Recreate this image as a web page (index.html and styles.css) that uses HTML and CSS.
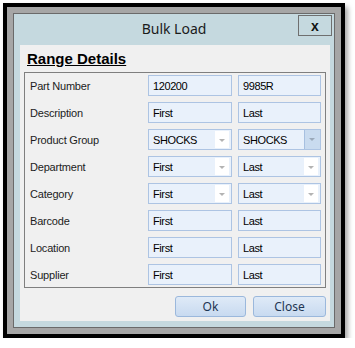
FILE: index.html
```html
<!DOCTYPE html>
<html lang="en">
<head>
    <meta charset="UTF-8">
    <title>Bulk Load</title>
    <link rel="stylesheet" href="styles.css">
</head>
<body>
    <div class="frame">
        <div class="window">
            <!-- Title bar -->
            <div class="titlebar">
                <span class="title">Bulk Load</span>
                <button class="close-x">x</button>
            </div>
            <!-- Panel -->
            <div class="panel">
                <h2 class="heading">Range Details</h2>
                <div class="group">
                    <div class="row">
                        <label>Part Number</label>
                        <div class="box">120200</div>
                        <div class="box">9985R</div>
                    </div>
                    <div class="row">
                        <label>Description</label>
                        <div class="box">First</div>
                        <div class="box">Last</div>
                    </div>
                    <div class="row">
                        <label>Product Group</label>
                        <div class="box combo">SHOCKS<span class="drop"></span></div>
                        <div class="box combo">SHOCKS<span class="drop active"></span></div>
                    </div>
                    <div class="row">
                        <label>Department</label>
                        <div class="box combo">First<span class="drop"></span></div>
                        <div class="box combo">Last<span class="drop"></span></div>
                    </div>
                    <div class="row">
                        <label>Category</label>
                        <div class="box combo">First<span class="drop"></span></div>
                        <div class="box combo">Last<span class="drop"></span></div>
                    </div>
                    <div class="row">
                        <label>Barcode</label>
                        <div class="box">First</div>
                        <div class="box">Last</div>
                    </div>
                    <div class="row">
                        <label>Location</label>
                        <div class="box">First</div>
                        <div class="box">Last</div>
                    </div>
                    <div class="row">
                        <label>Supplier</label>
                        <div class="box">First</div>
                        <div class="box">Last</div>
                    </div>
                </div>
                <div class="actions">
                    <button class="btn ok">Ok</button>
                    <button class="btn close">Close</button>
                </div>
            </div>
        </div>
    </div>
</body>
</html>
```

FILE: styles.css
```css
* {
    margin: 0;
    padding: 0;
    box-sizing: border-box;
}
body {
    font-family: 'Liberation Sans', sans-serif;
    background-color: #ffffff;
    color: #1a1a1a;
    padding: 3px 0 0 3px;
}
/* Outer frame */
.frame {
    width: 342px;
    height: 335px;
    border: 4px solid #000000;
    background-color: #a6a6a6;
    padding: 6px;
    box-shadow: 3px 4px 5px rgba(0, 0, 0, 0.35);
}
.window {
    height: 100%;
    border: 1px solid #6a6a6a;
    background-color: #c5d9df;
    display: flex;
    flex-direction: column;
}
/* Title bar */
.titlebar {
    height: 31px;
    display: flex;
    justify-content: center;
    align-items: center;
    position: relative;
}
.title {
    font-family: 'Noto Sans', sans-serif;
    font-size: 14px;
    color: #1b1b1b;
    margin-top: -2px;
}
.close-x {
    position: absolute;
    top: 1px;
    right: 2px;
    width: 34px;
    height: 21px;
    border: 1px solid #6f6f6f;
    background-color: #c5d9df;
    font-family: 'Liberation Sans', sans-serif;
    font-weight: bold;
    font-size: 14px;
    line-height: 16px;
    color: #111111;
}
/* Panel */
.panel {
    flex: 1;
    background-color: #f0f0f0;
    margin: 0 4px 6px 6px;
    padding: 5px 4px 0 4px;
}
.heading {
    font-size: 15px;
    font-weight: bold;
    text-decoration: underline;
    color: #000000;
    margin-left: 3px;
    height: 22px;
    line-height: 17px;
}
.group {
    border: 1px solid #7f7f7f;
    padding: 2px 3px 2px 5px;
    display: flex;
    flex-direction: column;
    gap: 6px;
}
.row {
    display: grid;
    grid-template-columns: 112px 84px 83px;
    column-gap: 6px;
    align-items: center;
}
.row label {
    font-size: 11px;
    letter-spacing: -0.2px;
    color: #1c1c1c;
    padding-top: 1px;
}
.box {
    height: 21px;
    background-color: #e9f1fb;
    border: 1px solid #adc4e3;
    font-size: 11px;
    letter-spacing: -0.4px;
    line-height: 20px;
    padding-left: 4px;
    color: #000000;
    position: relative;
}
.drop {
    position: absolute;
    top: 1px;
    right: 2px;
    width: 14px;
    height: 17px;
    background-color: #ffffff;
}
.drop::after {
    content: '';
    position: absolute;
    left: 4px;
    top: 8px;
    border-left: 3px solid transparent;
    border-right: 3px solid transparent;
    border-top: 3px solid #b3b3b3;
}
.drop.active {
    top: 0;
    right: 0;
    height: 19px;
    width: 16px;
    background-color: #c9dbef;
    border-left: 1px solid #a7c0e0;
}
.drop.active::after {
    left: 4px;
    top: 8px;
    border-top-color: #9aa9ba;
}
/* Buttons */
.actions {
    display: flex;
    justify-content: flex-end;
    gap: 7px;
    margin-top: 8px;
}
.btn {
    height: 21px;
    border: 1px solid #9bb8dc;
    border-radius: 3px;
    background: linear-gradient(#dfeaf7, #c8daf0);
    font-family: 'Noto Sans', sans-serif;
    font-size: 12px;
    color: #1e3552;
}
.ok {
    width: 71px;
}
.close {
    width: 73px;
}
```
